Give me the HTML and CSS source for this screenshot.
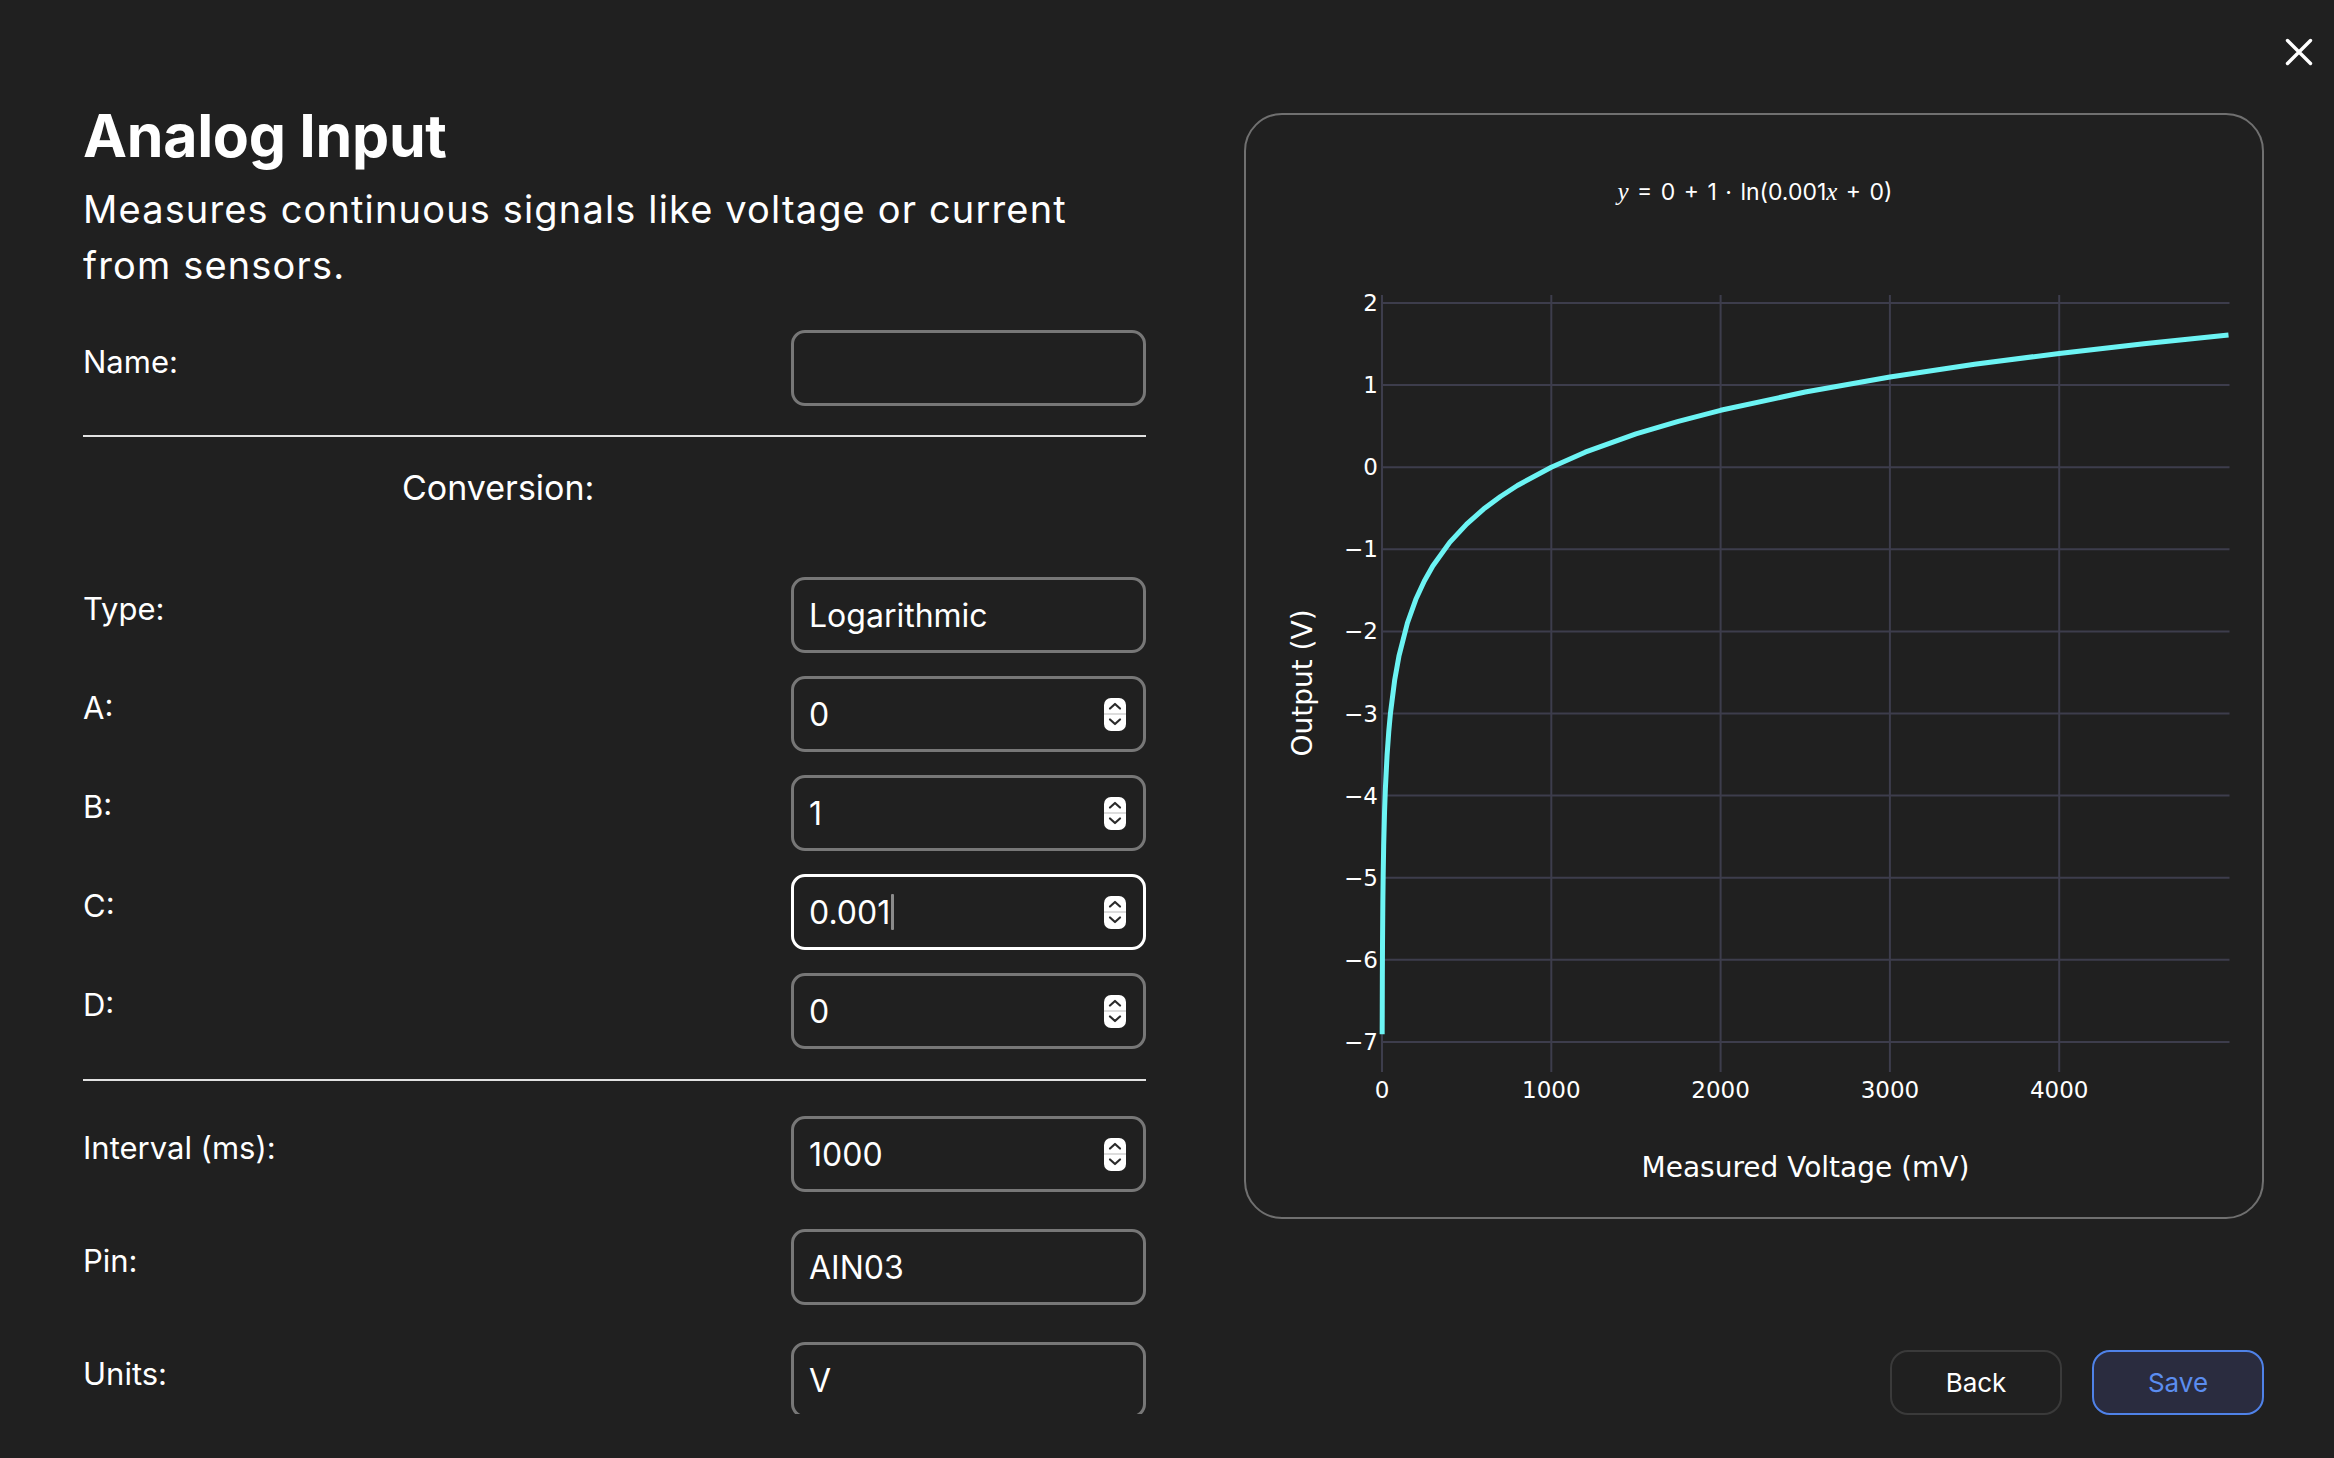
FILE: index.html
```html
<!DOCTYPE html>
<html lang="en">
<head>
<meta charset="utf-8">
<title>Analog Input</title>
<link rel="stylesheet" href="styles.css">
</head>
<body>
<button class="close" aria-label="Close">
  <svg width="28" height="28" viewBox="0 0 28 28"><path d="M2.5 2.5 L25.5 25.5 M25.5 2.5 L2.5 25.5" fill="none" stroke="#fff" stroke-width="3.4" stroke-linecap="round"/></svg>
</button>
<main class="modal">
  <section class="form-col">
    <h1 class="title">Analog Input</h1>
    <p class="subtitle">Measures continuous signals like voltage or current from sensors.</p>
    <div class="row row-name"><span class="label">Name:</span><div class="field"></div></div>
    <hr class="divider divider-top">
    <h2 class="section-title">Conversion:</h2>
    <div class="rows rows-conv">
      <div class="row"><span class="label">Type:</span><div class="field"><span class="value">Logarithmic</span></div></div>
      <div class="row"><span class="label">A:</span><div class="field"><span class="value">0</span>
        <span class="spin"><svg width="22" height="33" viewBox="0 0 22 33"><rect width="22" height="33" rx="7" fill="#fff"/><line x1="0" y1="16" x2="22" y2="16" stroke="#d0d0d0" stroke-width="1.5"/><path d="M6 10.5 L11 6 L16 10.5 M6 21.5 L11 26 L16 21.5" fill="none" stroke="#2a2a2a" stroke-width="2.2" stroke-linecap="round" stroke-linejoin="round"/></svg></span></div></div>
      <div class="row"><span class="label">B:</span><div class="field"><span class="value">1</span>
        <span class="spin"><svg width="22" height="33" viewBox="0 0 22 33"><rect width="22" height="33" rx="7" fill="#fff"/><line x1="0" y1="16" x2="22" y2="16" stroke="#d0d0d0" stroke-width="1.5"/><path d="M6 10.5 L11 6 L16 10.5 M6 21.5 L11 26 L16 21.5" fill="none" stroke="#2a2a2a" stroke-width="2.2" stroke-linecap="round" stroke-linejoin="round"/></svg></span></div></div>
      <div class="row"><span class="label">C:</span><div class="field focused"><span class="value">0.001<span class="caret"></span></span>
        <span class="spin"><svg width="22" height="33" viewBox="0 0 22 33"><rect width="22" height="33" rx="7" fill="#fff"/><line x1="0" y1="16" x2="22" y2="16" stroke="#d0d0d0" stroke-width="1.5"/><path d="M6 10.5 L11 6 L16 10.5 M6 21.5 L11 26 L16 21.5" fill="none" stroke="#2a2a2a" stroke-width="2.2" stroke-linecap="round" stroke-linejoin="round"/></svg></span></div></div>
      <div class="row"><span class="label">D:</span><div class="field"><span class="value">0</span>
        <span class="spin"><svg width="22" height="33" viewBox="0 0 22 33"><rect width="22" height="33" rx="7" fill="#fff"/><line x1="0" y1="16" x2="22" y2="16" stroke="#d0d0d0" stroke-width="1.5"/><path d="M6 10.5 L11 6 L16 10.5 M6 21.5 L11 26 L16 21.5" fill="none" stroke="#2a2a2a" stroke-width="2.2" stroke-linecap="round" stroke-linejoin="round"/></svg></span></div></div>
    </div>
    <hr class="divider divider-bottom">
    <div class="rows rows-misc">
      <div class="row"><span class="label">Interval (ms):</span><div class="field"><span class="value">1000</span>
        <span class="spin"><svg width="22" height="33" viewBox="0 0 22 33"><rect width="22" height="33" rx="7" fill="#fff"/><line x1="0" y1="16" x2="22" y2="16" stroke="#d0d0d0" stroke-width="1.5"/><path d="M6 10.5 L11 6 L16 10.5 M6 21.5 L11 26 L16 21.5" fill="none" stroke="#2a2a2a" stroke-width="2.2" stroke-linecap="round" stroke-linejoin="round"/></svg></span></div></div>
      <div class="row"><span class="label">Pin:</span><div class="field"><span class="value">AIN03</span></div></div>
      <div class="row"><span class="label">Units:</span><div class="field"><span class="value">V</span></div></div>
    </div>
  </section>
  <section class="chart-col">
    <div class="chart-card">
      <svg class="chart" viewBox="0 2 1016 1102" width="1016" height="1102">
        <text class="formula" x="509" y="87" text-anchor="middle"><tspan class="math">y</tspan> = 0 + 1 · ln(0.001<tspan class="math">x</tspan> + 0)</text>
        <g class="grid">
          <line x1="136" y1="190" x2="983.5" y2="190"/>
          <line x1="136" y1="272.1" x2="983.5" y2="272.1"/>
          <line x1="136" y1="354.2" x2="983.5" y2="354.2"/>
          <line x1="136" y1="436.3" x2="983.5" y2="436.3"/>
          <line x1="136" y1="518.4" x2="983.5" y2="518.4"/>
          <line x1="136" y1="600.5" x2="983.5" y2="600.5"/>
          <line x1="136" y1="682.6" x2="983.5" y2="682.6"/>
          <line x1="136" y1="764.7" x2="983.5" y2="764.7"/>
          <line x1="136" y1="846.8" x2="983.5" y2="846.8"/>
          <line x1="136" y1="928.9" x2="983.5" y2="928.9"/>
          <line x1="136" y1="182" x2="136" y2="959"/>
          <line x1="305.3" y1="182" x2="305.3" y2="959"/>
          <line x1="474.6" y1="182" x2="474.6" y2="959"/>
          <line x1="643.9" y1="182" x2="643.9" y2="959"/>
          <line x1="813.2" y1="182" x2="813.2" y2="959"/>
        </g>
        <g class="tick ytick" text-anchor="end">
          <text x="132" y="190">2</text>
          <text x="132" y="272.1">1</text>
          <text x="132" y="354.2">0</text>
          <text x="132" y="436.3">−1</text>
          <text x="132" y="518.4">−2</text>
          <text x="132" y="600.5">−3</text>
          <text x="132" y="682.6">−4</text>
          <text x="132" y="764.7">−5</text>
          <text x="132" y="846.8">−6</text>
          <text x="132" y="928.9">−7</text>
        </g>
        <g class="tick" text-anchor="middle">
          <text x="136" y="985">0</text>
          <text x="305.3" y="985">1000</text>
          <text x="474.6" y="985">2000</text>
          <text x="643.9" y="985">3000</text>
          <text x="813.2" y="985">4000</text>
        </g>
        <text class="axis-title" x="559.5" y="1064" text-anchor="middle">Measured Voltage (mV)</text>
        <text class="axis-title" transform="translate(66 570) rotate(-90)" text-anchor="middle">Output (V)</text>
        <polyline class="curve" points="136.17,921.3 136.34,864.4 136.51,831.1 136.85,789.2 137.19,761.6 137.69,732.3 138.54,699.0 139.39,675.4 141.08,642.1 142.77,618.5 144.47,600.1 148.70,566.9 152.93,543.2 161.40,510.0 169.86,486.3 178.33,468.0 186.79,453.0 203.72,429.4 220.65,411.1 237.58,396.1 254.51,383.5 271.44,372.5 305.30,354.2 339.16,339.2 389.95,320.9 432.3,308.3 474.60,297.3 559.25,279.0 643.90,264.0 728.55,251.3 813.20,240.4 897.85,230.7 982.50,222.1"/>
      </svg>
    </div>
    <div class="actions">
      <button class="btn btn-back">Back</button>
      <button class="btn btn-save">Save</button>
    </div>
  </section>
</main>
</body>
</html>
```

FILE: styles.css
```css
html, body {
  margin: 0;
  height: 100%;
}

body {
  background: #202020;
  color: #ffffff;
  font-family: Inter, "Noto Sans", sans-serif;
  overflow: hidden;
  position: relative;
}

.close {
  position: absolute;
  top: 38px;
  right: 21px;
  width: 28px;
  height: 28px;
  padding: 0;
  border: 0;
  background: none;
  cursor: pointer;
}

.close svg {
  display: block;
}

.modal {
  display: grid;
  grid-template-columns: 1063px 1020px;
  column-gap: 98px;
  padding-left: 83px;
  height: 1458px;
  box-sizing: border-box;
}

/* ---------- left form column ---------- */

.form-col {
  height: 1414px;
  overflow: hidden;
  padding-top: 100px;
  box-sizing: border-box;
}

.title {
  margin: 0;
  font-size: 59px;
  line-height: 71px;
  font-weight: 700;
  letter-spacing: -0.3px;
}

.subtitle {
  margin: 10px 0 0;
  font-size: 38px;
  line-height: 56px;
  letter-spacing: 1.15px;
  max-width: 1050px;
}

.row {
  display: flex;
  justify-content: space-between;
  align-items: center;
}

.row-name {
  margin-top: 37px;
}

.label {
  font-size: 31px;
  line-height: 36px;
  padding-bottom: 12px;
}

.field {
  box-sizing: border-box;
  width: 355px;
  height: 76px;
  border: 3px solid #777777;
  border-radius: 14px;
  display: flex;
  align-items: center;
  justify-content: space-between;
  padding: 0 17px 0 15px;
  font-size: 32px;
}

.field.focused {
  border-color: #ffffff;
}

.value {
  display: flex;
  align-items: center;
}

.caret {
  display: inline-block;
  width: 3px;
  height: 36px;
  margin-left: 1px;
  background: #8a8a8a;
  border-radius: 1px;
}

.spin {
  display: flex;
}

.divider {
  border: 0;
  height: 2px;
  margin: 0;
  background: #e2e2e2;
}

.divider-top {
  margin-top: 29px;
}

.section-title {
  margin: 27px 0 0;
  padding-left: 319px;
  font-size: 34px;
  font-weight: 400;
  line-height: 48px;
}

.rows {
  display: flex;
  flex-direction: column;
}

.rows-conv {
  margin-top: 65px;
  gap: 23px;
}

.divider-bottom {
  margin-top: 30px;
}

.rows-misc {
  margin-top: 35px;
  gap: 37px;
}

/* ---------- right chart column ---------- */

.chart-col {
  display: flex;
  flex-direction: column;
}

.chart-card {
  margin-top: 113px;
  width: 1020px;
  height: 1106px;
  box-sizing: border-box;
  border: 2px solid #707070;
  border-radius: 38px;
  overflow: hidden;
}

.chart {
  display: block;
}

.formula {
  fill: #ffffff;
  font-family: Inter, "Noto Sans", sans-serif;
  font-size: 23px;
  word-spacing: 2px;
}

.math {
  font-family: "Liberation Serif", "DejaVu Serif", serif;
  font-style: italic;
  font-size: 25px;
}

.grid line {
  stroke: #3d3d4c;
  stroke-width: 2;
}

.tick {
  fill: #ffffff;
  font-family: "DejaVu Sans", Verdana, sans-serif;
  font-size: 23px;
}

.ytick text {
  dominant-baseline: central;
}

.axis-title {
  fill: #ffffff;
  font-family: "DejaVu Sans", Verdana, sans-serif;
  font-size: 28px;
}

.curve {
  fill: none;
  stroke: #6cf4f4;
  stroke-width: 5;
  stroke-linejoin: round;
}

.actions {
  display: flex;
  justify-content: flex-end;
  gap: 30px;
  margin-top: 131px;
}

.btn {
  box-sizing: border-box;
  width: 172px;
  height: 65px;
  border-radius: 18px;
  font-family: Inter, "Noto Sans", sans-serif;
  font-size: 26px;
  background: transparent;
  color: #ffffff;
  border: 2px solid #3a3a3a;
  cursor: pointer;
}

.btn-save {
  border: 2.5px solid #4f82e8;
  background: #2a2c3f;
  color: #5b8def;
}
```
